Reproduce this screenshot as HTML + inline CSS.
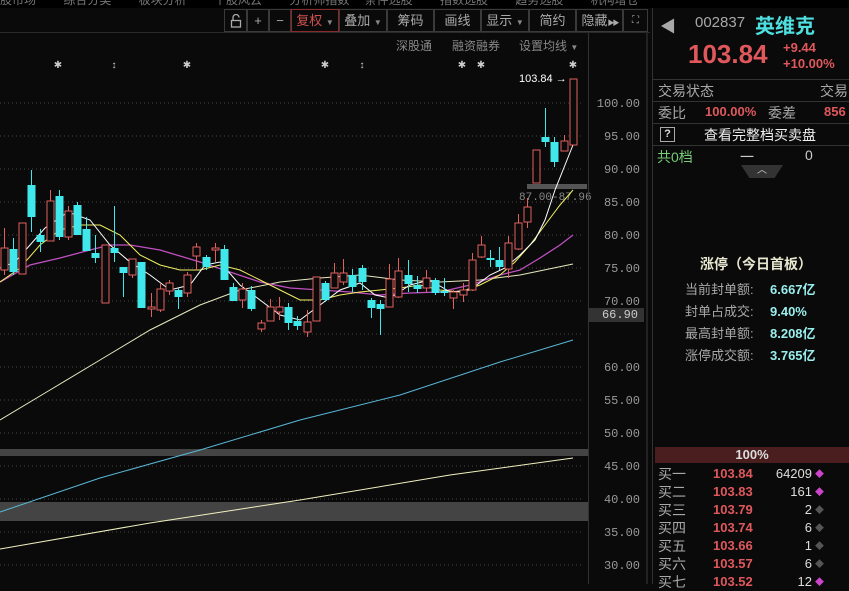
<!DOCTYPE html>
<html><head><meta charset="utf-8"><style>
*{margin:0;padding:0;box-sizing:border-box}
body{width:849px;height:584px;overflow:hidden;background:#0a0a0a;font-family:"Liberation Sans","Noto Sans CJK SC",sans-serif;color:#bbb;position:relative}
.a{position:absolute;white-space:nowrap}
.btn{position:absolute;top:9px;height:23px;border:1px solid #3a3a3a;color:#aaa;font-size:13px;line-height:21px;text-align:center;white-space:nowrap;overflow:hidden}
.r{color:#e0585c}.c{color:#4ee0e0}.g{color:#a8a8a8}
.tri{font-size:8px;color:#888}
</style></head><body>
<div class="a" style="left:0;top:0;width:652px;height:8px;background:#000;font-size:12px;color:#777;overflow:hidden">
<span style="position:relative;top:-9px">股市场　　 综合分类　　 板块分析　　 个股风云　　 分析师指数　 条件选股　　 指数选股　　 趋势选股　　 机构增仓　　 热点追击</span></div>
<div class="a" style="left:652px;top:0;width:197px;height:8px;background:#000"></div>
<div class="a" style="left:0;top:32px;width:650px;height:1px;background:#2a2a2a"></div>
<div class="btn" style="left:224px;width:23px"><svg width="12" height="14" viewBox="0 0 12 14" style="margin-top:4px"><path d="M3 6V3.5a3 3 0 0 1 6 0" fill="none" stroke="#aaa" stroke-width="1.3"/><rect x="1.5" y="6.5" width="9" height="6.5" fill="none" stroke="#aaa" stroke-width="1.3"/></svg></div>
<div class="btn" style="left:247px;width:22px">+</div>
<div class="btn" style="left:269px;width:22px">−</div>
<div class="btn" style="left:291px;width:48px;border-color:#8a2a2a;color:#d05050">复权 <span class="tri">▼</span></div>
<div class="btn" style="left:339px;width:48px">叠加 <span class="tri">▼</span></div>
<div class="btn" style="left:387px;width:47px">筹码</div>
<div class="btn" style="left:434px;width:47px">画线</div>
<div class="btn" style="left:481px;width:48px">显示 <span class="tri">▼</span></div>
<div class="btn" style="left:529px;width:47px">简约</div>
<div class="btn" style="left:576px;width:47px">隐藏<span style="font-size:7px;letter-spacing:-2px">▶▶</span></div>
<div class="btn" style="left:623px;width:25px;font-size:10px">⛶</div>
<div class="a" style="left:396px;top:37px;font-size:12px;color:#888">深股通</div>
<div class="a" style="left:452px;top:37px;font-size:12px;color:#888">融资融券</div>
<div class="a" style="left:519px;top:37px;font-size:12px;color:#888">设置均线 <span class="tri">▼</span></div>

<svg class="a" style="left:0;top:0" width="652" height="584" id="ch"></svg>
<div class="a" style="left:588px;top:33px;width:1px;height:551px;background:#333"></div>
<div class="a" style="left:646px;top:33px;width:2px;height:551px;background:#222"></div>
<div class="a" style="left:589px;top:308px;width:55px;height:14px;background:#333;color:#ccc;font-size:12px;line-height:14px;text-align:right;padding-right:6px;font-family:'Liberation Mono',monospace">66.90</div>

<div class="a" style="left:652px;top:8px;width:1px;height:576px;background:#333"></div>
<div class="a g" style="left:660px;top:13px;font-size:16px">◀</div>
<div class="a g" style="left:695px;top:14px;font-size:15px">002837</div>
<div class="a c" style="left:755px;top:10px;font-size:20px;font-weight:bold">英维克</div>
<div class="a r" style="left:688px;top:39px;font-size:26px;font-weight:bold">103.84</div>
<div class="a r" style="left:783px;top:40px;font-size:13px;font-weight:bold">+9.44</div>
<div class="a r" style="left:783px;top:56px;font-size:13px;font-weight:bold">+10.00%</div>
<div class="a" style="left:653px;top:79px;width:196px;height:1px;background:#333"></div>
<div class="a g" style="left:658px;top:81px;font-size:14px">交易状态</div>
<div class="a g" style="left:820px;top:81px;font-size:14px">交易</div>
<div class="a" style="left:653px;top:101px;width:196px;height:1px;background:#333"></div>
<div class="a g" style="left:658px;top:103px;font-size:14px">委比</div>
<div class="a r" style="left:705px;top:104px;font-size:13px;font-weight:bold">100.00%</div>
<div class="a g" style="left:768px;top:103px;font-size:14px">委差</div>
<div class="a r" style="left:824px;top:104px;font-size:13px;font-weight:bold">856</div>
<div class="a" style="left:653px;top:123px;width:196px;height:1px;background:#333"></div>
<div class="a" style="left:660px;top:127px;width:15px;height:15px;border:1px solid #aaa;color:#ddd;font-size:11px;line-height:13px;text-align:center;font-weight:bold">?</div>
<div class="a" style="left:704px;top:125px;font-size:14px;color:#eee">查看完整档买卖盘</div>
<div class="a" style="left:653px;top:145px;width:196px;height:1px;background:#333"></div>
<div class="a" style="left:657px;top:147px;font-size:14px;color:#7c7">共0档</div>
<div class="a" style="left:740px;top:147px;font-size:14px;color:#ccc">一</div>
<div class="a" style="left:805px;top:147px;font-size:14px;color:#ccc">0</div>
<div class="a" style="left:741px;top:165px;width:42px;height:13px;background:#333;clip-path:polygon(0 0,100% 0,80% 100%,20% 100%);color:#ccc;font-size:10px;text-align:center;line-height:11px">︿</div>
<div class="a" style="left:700px;top:254px;font-size:14px;color:#e8e8d0;font-weight:bold">涨停（今日首板）</div>
<div class="a g" style="left:685px;top:279px;font-size:13px;line-height:22px">当前封单额:<br>封单占成交:<br>最高封单额:<br>涨停成交额:</div>
<div class="a c" style="left:770px;top:279px;font-size:13px;line-height:22px;font-weight:bold;color:#9ee">6.667亿<br>9.40%<br>8.208亿<br>3.765亿</div>
<div class="a" style="left:655px;top:447px;width:194px;height:16px;background:#4a1e1e;color:#ddd;font-size:13px;text-align:center;line-height:16px;font-weight:bold">100%</div>
<div class="a g" style="left:658px;top:465px;font-size:14px;line-height:18px">买一<br>买二<br>买三<br>买四<br>买五<br>买六<br>买七</div>
<div class="a r" style="left:713px;top:465px;font-size:13px;line-height:18px;font-weight:bold">103.84<br>103.83<br>103.79<br>103.74<br>103.66<br>103.57<br>103.52</div>
<div class="a" style="left:760px;top:465px;width:52px;font-size:13px;line-height:18px;text-align:right;color:#ddd">64209<br>161<br>2<br>6<br>1<br>6<br>12</div>
<div class="a" style="left:815px;top:465px;font-size:9px;line-height:18px;color:#c4c">◆<br>◆<br><span style="color:#555">◆</span><br><span style="color:#555">◆</span><br><span style="color:#555">◆</span><br><span style="color:#555">◆</span><br>◆</div>

<script>
var s=document.getElementById('ch'),h='';
function y(p){return 103+(100-p)*6.6}
[100,95,90,85,80,75,70,65,60,55,50,45,40,35,30].forEach(function(p){
 var yy=y(p);h+='<line x1="0" x2="583" y1="'+yy+'" y2="'+yy+'" stroke="#444" stroke-dasharray="1,3"/>';
 if(p!=65)h+='<text x="640" y="'+(yy+4)+'" text-anchor="end" fill="#999" font-size="12" font-family="Liberation Mono">'+p.toFixed(2)+'</text>';
});
h+='<rect x="0" y="449" width="588" height="7" fill="#444"/><rect x="0" y="502" width="588" height="19" fill="#444"/>';
h+='<rect x="527" y="184" width="60" height="5" fill="#555"/>';
h+='<text x="519" y="200" fill="#888" font-size="11" font-family="Liberation Mono">87.00-87.96</text>';
h+='<text x="519" y="82" fill="#fff" font-size="11" font-family="Liberation Sans">103.84 →</text>';
[[58,'✱'],[114,'↕'],[187,'✱'],[325,'✱'],[362,'↕'],[462,'✱'],[481,'✱'],[573,'✱']].forEach(function(m){h+='<text x="'+m[0]+'" y="68" text-anchor="middle" fill="#ccc" font-size="10">'+m[1]+'</text>'});
function pl(pts,c,w){h+='<polyline fill="none" stroke="'+c+'" stroke-width="'+(w||1)+'" points="'+pts+'"/>'}
pl("0,549 150,523 300,500 450,475 573,458","#f0f0c0");
pl("0,512 100,478 200,450 300,420 400,395 500,362 573,340","#5ab8d8");
pl("0,420 50,390 100,360 150,330 200,305 240,290 280,282 320,278 360,275 400,280 440,282 480,280 520,275 573,264","#e8e8c0");
pl("0,282 30,265 60,258 90,250 110,245 130,245 160,250 200,262 230,272 260,282 290,288 320,290 350,292 380,295 410,293 440,292 470,285 500,275 520,270 540,258 560,245 573,235","#c050c0",1.3);
pl("0,282 20,268 40,245 60,230 80,225 100,225 120,235 140,255 160,265 180,270 200,270 220,265 240,270 260,280 280,290 300,300 320,300 340,295 360,292 380,290 400,288 420,285 440,290 460,292 480,285 500,275 515,262 530,245 545,225 560,205 573,190","#f0f060");
pl("0,268 15,262 30,245 45,228 68,212 90,220 110,245 130,262 150,275 170,290 190,285 205,265 220,262 240,285 260,300 280,315 300,320 320,305 340,290 360,283 375,295 390,298 410,285 430,280 450,292 470,290 490,275 505,268 520,255 535,240 545,220 555,190 565,165 573,145","#ffffff");
var C=[[4,248,270,228,275,1],[13,249,272,238,275,0],[22,223,274,223,274,1],[31,185,217,170,232,0],[40,235,242,229,252,0],[50,201,241,190,241,1],[59,196,237,190,240,0],[68,211,237,206,240,1],[77,205,235,202,235,0],[86,229,251,217,251,0],[95,253,258,235,263,0],[105,245,303,245,303,1],[114,248,253,206,262,0],[123,267,273,267,297,0],[132,259,275,259,278,1],[141,262,308,262,308,0],[151,307,309,293,317,1],[160,289,310,283,312,1],[169,283,291,280,295,1],[178,290,297,288,309,0],[187,275,293,272,297,1],[196,247,256,243,270,1],[206,257,267,255,270,0],[215,248,250,243,262,1],[224,249,280,245,280,0],[233,287,301,283,301,0],[242,289,300,283,308,1],[251,290,309,286,311,0],[261,323,329,320,332,1],[270,307,321,299,321,1],[279,307,312,297,320,1],[288,307,323,303,330,0],[297,321,326,316,330,0],[307,322,332,310,337,1],[316,277,321,277,321,1],[325,283,300,281,302,0],[334,273,288,263,288,1],[343,273,282,259,285,1],[352,275,287,269,292,0],[362,268,282,265,290,0],[371,300,308,298,318,0],[380,304,309,300,335,0],[389,279,307,264,307,1],[398,271,297,258,298,1],[408,275,284,260,292,0],[417,285,289,276,293,0],[426,278,288,270,292,1],[435,280,293,278,295,0],[444,291,293,278,296,0],[453,292,298,290,309,1],[463,290,295,283,302,1],[472,260,290,253,291,1],[481,245,257,236,258,1],[490,258,260,250,267,0],[499,260,267,247,270,0],[508,243,269,236,278,1],[518,223,249,214,250,1],[527,207,222,198,228,1],[536,150,183,150,183,1],[545,137,142,108,147,0],[554,142,162,137,167,0],[564,141,151,135,151,1],[573,79,145,79,145,1]];
C.forEach(function(k){var col=k[5]?'#e06060':'#40e8ec';
 h+='<line x1="'+(k[0]+.5)+'" x2="'+(k[0]+.5)+'" y1="'+k[3]+'" y2="'+k[4]+'" stroke="'+col+'"/>';
 var bh=Math.max(k[2]-k[1],1);
 if(k[5])h+='<rect x="'+(k[0]-3)+'" y="'+k[1]+'" width="7" height="'+bh+'" fill="#0a0a0a" stroke="'+col+'"/>';
 else h+='<rect x="'+(k[0]-3.5)+'" y="'+k[1]+'" width="8" height="'+bh+'" fill="'+col+'"/>';
});
s.innerHTML=h;
</script>
</body></html>
